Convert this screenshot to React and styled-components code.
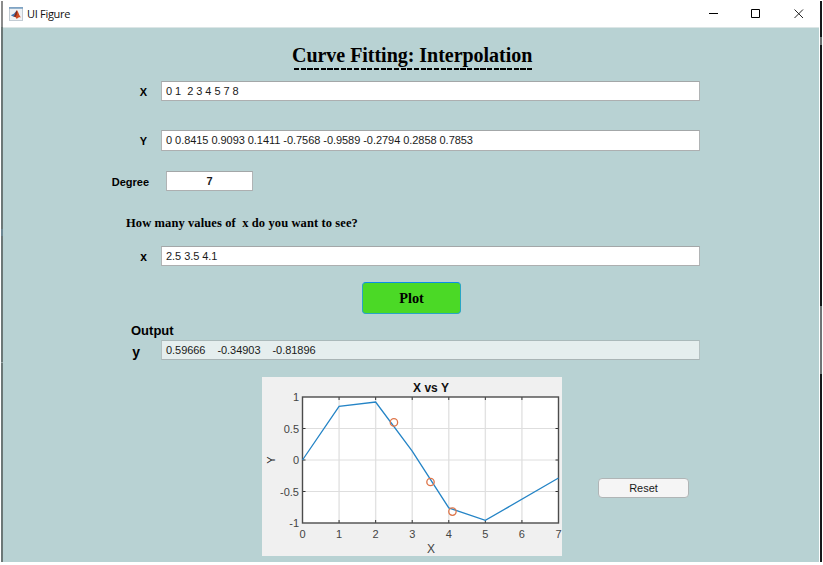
import React from "react";
import styled, { createGlobalStyle } from "styled-components";

const Global = createGlobalStyle`
  * { box-sizing: border-box; }
  body { margin: 0; background: #fff; overflow: hidden; }
`;

const sans = `"Liberation Sans", Arial, sans-serif`;
const serif = `"Liberation Serif", "Times New Roman", serif`;

const Screen = styled.div`
  width: 823px;
  height: 565px;
  padding: 1px 0 3px 1px;
  display: flex;
  background: #fff;
`;
const Edge = styled.div`
  width: 2px;
  background: linear-gradient(
    #8b8b8b 26px, #6b7776 26px, #6b7776 228px, #6d8791 228px, #6d8791 235px,
    #6b7776 235px, #6b7776 361px, #98a5a5 361px, #98a5a5 362px, #6b7776 362px
  );
`;
const RightEdge = styled.div`
  width: 2px;
  margin-left: 1px;
  background: linear-gradient(
    #16181a 36px, #6c6f70 36px, #6c6f70 44px, #16181a 44px,
    #16181a 305px, #707475 305px, #707475 373px, #16181a 373px
  );
`;
const Window = styled.main`
  width: 816px;
  display: flex;
  flex-direction: column;
  background: #b8d2d3;
`;
const TitleBar = styled.header`
  height: 27px;
  flex: none;
  display: flex;
  align-items: center;
  padding: 0 15px 1px 6px;
  background: #fff;
  border-bottom: 1px solid #dce6e6;
`;
const WindowTitle = styled.span`
  flex: 1;
  margin-left: 4px;
  font: 11px/16px "Open Sans", sans-serif;
  letter-spacing: -0.3px;
  color: #111;
`;
const Controls = styled.div`
  display: flex;
  gap: 33px;
  svg { display: block; }
`;
const Form = styled.div`
  display: flex;
  flex-direction: column;
`;
const Heading = styled.h1`
  margin: 15px 0 0 289px;
  width: 260px;
  height: 25px;
  font: bold 20px/25px ${serif};
  letter-spacing: -0.03px;
  white-space: nowrap;
  color: #000;
`;
const DashedRule = styled.div`
  width: 239px;
  height: 1.5px;
  margin: 0 0 11.5px 290.5px;
  background: repeating-linear-gradient(90deg, #000 0 5.2px, transparent 5.2px 6.66px);
`;
const Row = styled.div`
  display: flex;
  align-items: center;
  height: ${(p) => p.$h || 20}px;
  margin-top: ${(p) => p.$top}px;
`;
const Label = styled.label`
  width: ${(p) => p.$w || 144}px;
  margin-right: ${(p) => p.$gap || 14}px;
  padding-top: ${(p) => p.$drop || 1}px;
  text-align: right;
  white-space: nowrap;
  font: bold ${(p) => p.$size || 11}px/18px ${sans};
  color: #000;
`;
const Field = styled.div`
  width: ${(p) => p.$w || 539}px;
  height: 100%;
  padding: 0 4px;
  border: 1px solid;
  border-color: ${(p) => (p.$off ? "#aab9ba #b4c1c2 #a9b4b5" : "#a3a7a8 #b0b4b5 #adafb0")};
  background: ${(p) => (p.$off ? "#e5eeee" : "#fff")};
  text-align: ${(p) => (p.$center ? "center" : "left")};
  font: ${(p) => (p.$center ? "bold" : "normal")} 11px/${(p) => (p.$center ? 19 : 18)}px ${sans};
  letter-spacing: -0.05px;
  white-space: pre;
  color: #1a1a1a;
`;
const Question = styled.p`
  margin: 23px 0 0 123px;
  height: 18px;
  font: bold 12.5px/18px ${serif};
  letter-spacing: 0.1px;
  white-space: pre;
  color: #000;
`;
const PlotButton = styled.button`
  margin: 16px 0 0 359px;
  width: 99px;
  height: 32px;
  padding: 0;
  border: 1px solid #2aa5c4;
  border-top-color: #0b8ee8;
  border-radius: 4px;
  background: #4bd926;
  font: bold 14.3px/30px ${serif};
  color: #000;
`;
const OutputTitle = styled.h2`
  margin: 7px 0 0 128px;
  height: 18px;
  font: bold 13px/19px ${sans};
  color: #000;
`;
const Bottom = styled.div`
  display: flex;
  margin: 17px 0 0 259px;
`;
const ChartPanel = styled.div`
  width: 300px;
  height: 179px;
  background: #f0f0f0;
  svg { display: block; }
`;
const ResetButton = styled.button`
  margin: 101px 0 0 36px;
  width: 91px;
  height: 20px;
  padding: 0;
  border: 1px solid #b0b5b6;
  border-radius: 4px;
  background: #f5f5f5;
  font: 11px/18px ${sans};
  color: #1a1a1a;
`;
const Tick = styled.text`
  font: ${(p) => p.$size || 11}px ${sans};
  fill: ${(p) => p.$color || "#444"};
`;
const ChartTitle = styled.text`
  font: bold 12px ${sans};
  fill: #111;
`;

const px = (v) => 40.5 + (v * 256) / 7;
const py = (v) => 83 - v * 63;
const line = [[0, 0], [1, 0.8515], [2, 0.92], [3, 0.1411], [4, -0.76], [5, -0.9589], [7, -0.2858]];
const points = [[2.5, 0.59666], [3.5, -0.34903], [4.1, -0.81896]];
const xs = [0, 1, 2, 3, 4, 5, 6, 7];
const ys = [1, 0.5, 0, -0.5, -1];

function Chart() {
  return (
    <ChartPanel>
      <svg width="300" height="179">
        <rect x="40.5" y="20" width="256" height="126" fill="#fff" />
        {xs.slice(1, 7).map((v) => (
          <g key={v}>
            <path d={`M${px(v)} 20V146`} stroke="#e2e2e2" strokeWidth="1.4" />
            <path d={`M${px(v)} 20v3M${px(v)} 146v-3`} stroke="#333" />
          </g>
        ))}
        {ys.slice(1, 4).map((v) => (
          <g key={v}>
            <path d={`M40.5 ${py(v)}H296.5`} stroke="#dedede" />
            <path d={`M40.5 ${py(v)}h3M296.5 ${py(v)}h-3`} stroke="#333" />
          </g>
        ))}
        <rect x="40.5" y="20" width="256" height="126" fill="none" stroke="#4c4c4c" strokeWidth="1.4" />
        <polyline points={line.map(([x, y]) => `${px(x)},${py(y)}`).join(" ")} fill="none" stroke="#2484c6" strokeWidth="1.3" />
        {points.map(([x, y]) => (
          <circle key={x} cx={px(x)} cy={py(y)} r="3.7" fill="none" stroke="#de7549" strokeWidth="1.3" />
        ))}
        {xs.map((v) => <Tick key={v} x={px(v)} y="161" textAnchor="middle">{v}</Tick>)}
        {ys.map((v) => <Tick key={v} x="37" y={py(v) + 4} textAnchor="end">{v}</Tick>)}
        <Tick $size={12} x="169" y="176" textAnchor="middle">X</Tick>
        <Tick $size={11} $color="#222" transform="translate(12.5 83) rotate(-90)" textAnchor="middle">Y</Tick>
        <ChartTitle x="169" y="14.5" textAnchor="middle">X vs Y</ChartTitle>
      </svg>
    </ChartPanel>
  );
}

function AppIcon() {
  return (
    <svg width="14" height="14" viewBox="0 0 14 14">
      <rect x="0.5" y="0.5" width="13" height="13" fill="#eff2f5" stroke="#c2cbd3" />
      <path d="M0 0h14v1.800H0z" fill="#7fa3c4" />
      <path d="M1.800 8.200l3-1.400L7.500 3.800 6.800 9.500 4.500 9.800z" fill="#3f78b5" />
      <path d="M4.500 9.600C6 8.800 6.800 4 8 3.200c1 .8 2 5 4 7.300-1.600-.8-2.600-.3-4.300 1.500C7 10.500 6 9.400 4.500 9.600z" fill="#d04a20" />
      <path d="M8 3.200c.3 2 0 4.500-1.300 6.800-.6-.4-1.300-.6-2.200-.4C6 8.800 6.800 4 8 3.200z" fill="#7a2b22" />
    </svg>
  );
}

export default function App() {
  return (
    <Screen>
      <Global />
      <Edge />
      <Window>
        <TitleBar>
          <AppIcon />
          <WindowTitle>UI Figure</WindowTitle>
          <Controls>
            <svg width="10" height="10"><path d="M1 4.500h9" stroke="#000" /></svg>
            <svg width="10" height="10"><path d="M.5.5h8v8h-8z" fill="none" stroke="#000" /></svg>
            <svg width="10" height="10"><path d="M.5.5l8.500 8.500M9 .5L.5 9" stroke="#222" /></svg>
          </Controls>
        </TitleBar>
        <Form>
          <Heading>Curve Fitting: Interpolation</Heading>
          <DashedRule />
          <Row $top={0}>
            <Label $drop={2}>X</Label>
            <Field>{"0 1  2 3 4 5 7 8"}</Field>
          </Row>
          <Row $top={29} $h={21}>
            <Label>Y</Label>
            <Field>0 0.8415 0.9093 0.1411 -0.7568 -0.9589 -0.2794 0.2858 0.7853</Field>
          </Row>
          <Row $top={20}>
            <Label $w={146} $gap={17} $drop={2}>Degree</Label>
            <Field $w={87} $center>7</Field>
          </Row>
          <Question>{"How many values of  x do you want to see?"}</Question>
          <Row $top={14}>
            <Label $size={12}>x</Label>
            <Field>2.5 3.5 4.1</Field>
          </Row>
          <PlotButton>Plot</PlotButton>
          <OutputTitle>Output</OutputTitle>
          <Row $top={1}>
            <Label $size={14} $w={137} $gap={21} $drop={3}>y</Label>
            <Field $off>{"0.59666    -0.34903    -0.81896"}</Field>
          </Row>
          <Bottom>
            <Chart />
            <ResetButton>Reset</ResetButton>
          </Bottom>
        </Form>
      </Window>
      <RightEdge />
    </Screen>
  );
}
